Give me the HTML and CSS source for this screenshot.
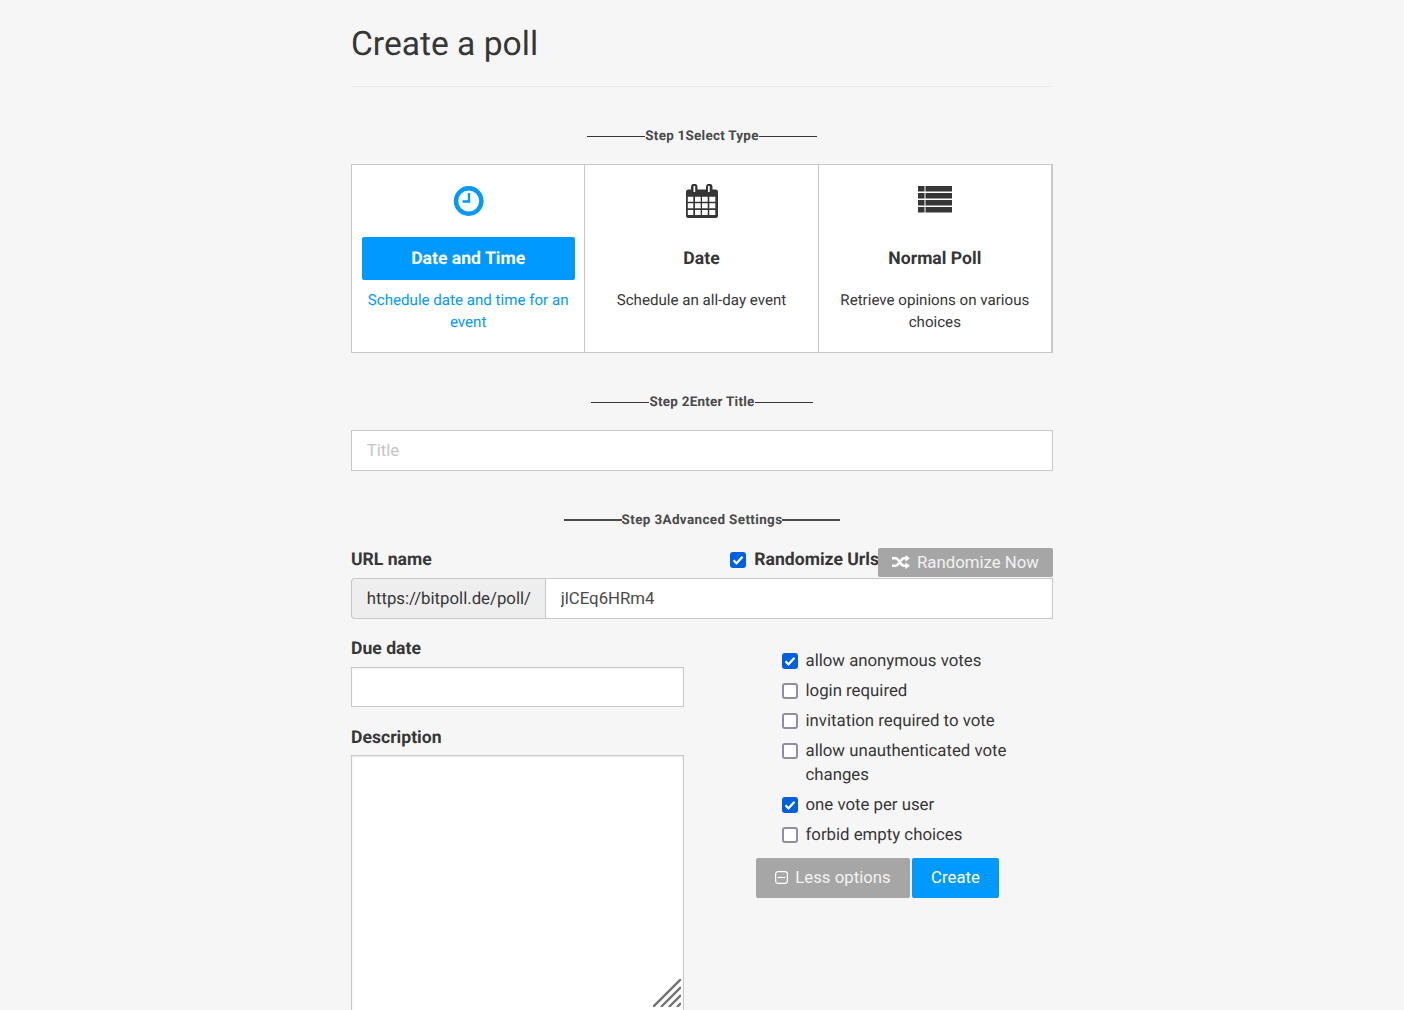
FILE: index.html
```html
<!DOCTYPE html>
<html lang="en">
<head>
<meta charset="utf-8">
<title>Create a poll</title>
<link rel="stylesheet" href="styles.css">
</head>
<body>
<main class="page">
  <h1 class="title">Create a poll</h1>

  <div class="step step-one"><span>Step 1</span><span>Select Type</span></div>
  <div class="types">
    <div class="type is-active">
      <svg class="type-icon" width="34" height="34" viewBox="0 0 34 34"><circle cx="16.700" cy="17" r="12.700" fill="#fff" stroke="#0099ff" stroke-width="4.400"/><path d="M17 9v8.500H10.500" fill="none" stroke="#0099ff" stroke-width="2.300"/></svg>
      <div class="type-name">Date and Time</div>
      <p class="type-text">Schedule date and time for an event</p>
    </div>
    <div class="type">
      <svg class="type-icon" width="34" height="34" viewBox="0 0 34 34"><path fill="#363636" d="M3 5.500H6V3a3 3 0 0 1 6.500 0v2.500H21V3a3 3 0 0 1 6.500 0v2.500H30.500A2.500 2.500 0 0 1 33 8V31.500A2.500 2.500 0 0 1 30.500 34h-27A2.500 2.500 0 0 1 1 31.500V8A2.500 2.500 0 0 1 3.500 5.500z"/><path fill="#fff" d="M8.500 2h1.700v6H8.500zM23 2h1.700v6H23zM2.800 12.700h5.500v5H2.800zM10 12.700h5.700v5H10zM17 12.700h5.700v5H17zM24.300 12.700h6v5h-6zM2.800 19.300h5.500v5H2.800zM10 19.300h5.700v5H10zM17 19.300h5.700v5H17zM24.300 19.300h6v5h-6zM2.800 26h5.500v5H2.800zM10 26h5.700v5H10zM17 26h5.700v5H17zM24.300 26h6v5h-6z"/></svg>
      <div class="type-name">Date</div>
      <p class="type-text">Schedule an all-day event</p>
    </div>
    <div class="type">
      <svg class="type-icon" width="34" height="34" viewBox="0 0 34 34"><path fill="#363636" d="M0 2h6.500v5.500H0zM7.500 2H34v5.500H7.500zM0 9h6.500v5.500H0zM7.500 9H34v5.500H7.500zM0 16h6.500v5.500H0zM7.500 16H34v5.500H7.500zM0 23h6.500v5.500H0zM7.500 23H34v5.500H7.500z"/></svg>
      <div class="type-name">Normal Poll</div>
      <p class="type-text">Retrieve opinions on various choices</p>
    </div>
  </div>

  <div class="step step-two"><span>Step 2</span><span>Enter Title</span></div>
  <input class="field title-field" type="text" placeholder="Title">

  <div class="step step-three"><span>Step 3</span><span>Advanced Settings</span></div>

  <div class="url-head">
    <label class="label">URL name</label>
    <div class="url-tools">
      <span class="box is-checked"><svg width="16" height="16" viewBox="0 0 16 16"><path d="M3.500 8.300l3 3 6-6.500" fill="none" stroke="#fff" stroke-width="2.200"/></svg></span>
      <span class="label randomize">Randomize Urls</span>
      <button class="btn btn-grey randomize-now" type="button">
        <svg width="18" height="14" viewBox="0 0 18 14"><path d="M0 3.200h3.500c3.500 0 5 7.600 8.500 7.600h2.500M0 10.800h3.500c1.400 0 2.400-1.100 3.300-2.700M8.800 5.800C9.700 4.200 10.700 3.200 12 3.200h2.500" fill="none" stroke="#fff" stroke-width="2.500"/><path d="M13.500 0l4.500 3.200-4.500 3.200zM13.500 7.600l4.500 3.200L13.500 14z" fill="#fff"/></svg>
        Randomize Now
      </button>
    </div>
  </div>
  <div class="url-group">
    <span class="url-addon">https://bitpoll.de/poll/</span>
    <input class="field url-input" type="text" value="jlCEq6HRm4">
  </div>

  <div class="settings">
    <div class="settings-left">
      <label class="label">Due date</label>
      <input class="field date-field" type="text">
      <label class="label desc-label">Description</label>
      <div class="desc-wrap">
        <textarea class="desc"></textarea>
        <svg class="grip" width="28" height="28" viewBox="0 0 28 28"><path d="M0 28L28 0M8 28L28 8M16 28L28 16M24 28L28 24" stroke="#737373" stroke-width="2.400" fill="none"/></svg>
      </div>
    </div>
    <div class="settings-right">
      <ul class="options">
        <li><span class="box is-checked"><svg width="16" height="16" viewBox="0 0 16 16"><path d="M3.500 8.300l3 3 6-6.500" fill="none" stroke="#fff" stroke-width="2.200"/></svg></span><span>allow anonymous votes</span></li>
        <li><span class="box"></span><span>login required</span></li>
        <li><span class="box"></span><span>invitation required to vote</span></li>
        <li><span class="box"></span><span>allow unauthenticated vote changes</span></li>
        <li><span class="box is-checked"><svg width="16" height="16" viewBox="0 0 16 16"><path d="M3.500 8.300l3 3 6-6.500" fill="none" stroke="#fff" stroke-width="2.200"/></svg></span><span>one vote per user</span></li>
        <li><span class="box"></span><span>forbid empty choices</span></li>
      </ul>
      <div class="actions">
        <button class="btn btn-grey btn-less" type="button">
          <svg width="13" height="13" viewBox="0 0 14 14"><rect x="0.700" y="0.700" width="12.600" height="12.600" rx="2.500" fill="none" stroke="#fff" stroke-width="1.300"/><path d="M3 7h8" stroke="#fff" stroke-width="1.300"/></svg>
          Less options
        </button>
        <button class="btn btn-blue" type="button">Create</button>
      </div>
    </div>
  </div>
</main>
</body>
</html>
```
FILE: styles.css
```css
* { box-sizing: border-box; }
html { overflow: hidden; }
body {
  margin: 0;
  background: #f6f6f6;
  color: #363636;
  font-family: Roboto, "Liberation Sans", sans-serif;
  font-size: 16.8px;
  text-rendering: geometricPrecision;
}
.page { width: 702px; margin: 0 auto; }
.title {
  margin: 0;
  padding-top: 24px;
  height: 87px;
  font-size: 33.6px;
  line-height: 42px;
  font-weight: 400;
  border-bottom: 1px solid #ececec;
}
.step {
  display: flex;
  justify-content: center;
  align-items: center;
  height: 20px;
  margin-top: 39px;
  font-size: 13.44px;
  letter-spacing: 0.26px;
  font-weight: 700;
  color: #4a4a4a;
}
.step::before, .step::after {
  content: "";
  width: 58px;
  height: 1px;
  background: #363636;
}
.step-three { letter-spacing: 0.38px; }
.step-three::before, .step-three::after { height: 2px; background: #4a4a4a; }

.types {
  display: grid;
  grid-template-columns: repeat(3, 1fr);
  margin-top: 18px;
  height: 189px;
  background: #fff;
  border: 1px solid #c8c8c8;
}
.type {
  display: flex;
  flex-direction: column;
  align-items: center;
  padding: 19px 9px 0 10px;
  text-align: center;
  border-right: 1px solid #c8c8c8;
}
.type-icon { display: block; flex: none; }
.type-name {
  align-self: stretch;
  margin-top: 19px;
  padding-right: 1px;
  height: 43px;
  line-height: 44px;
  font-size: 17.6px;
  font-weight: 700;
  border-radius: 2px;
}
.type-text {
  margin: 9px 1px 0 0;
  font-size: 15.12px;
  line-height: 22px;
}
.is-active .type-name { background: #0099ff; color: #fff; }
.is-active .type-text { color: #0099ff; }

.field {
  display: block;
  width: 100%;
  height: 41px;
  padding: 0 14.700px 2px;
  border: 1px solid #c8c8c8;
  border-radius: 0;
  background: #fff;
  color: #4a4a4a;
  font: 16.8px Roboto, "Liberation Sans", sans-serif;
  outline: 0;
}
.field::placeholder { color: #c6c6c6; }
.title-field { margin-top: 18px; }

.label { display: block; font-size: 17.6px; font-weight: 700; line-height: 24px; }
.url-head {
  display: flex;
  justify-content: space-between;
  align-items: flex-start;
  margin-top: 18px;
  height: 30px;
}
.url-tools { display: flex; align-items: flex-start; }
.url-tools .box { margin: 4px 8px 0 0; }
.randomize { margin-right: -1px; }
.url-group { display: flex; }
.url-addon {
  flex: none;
  width: 194px;
  height: 41px;
  line-height: 41px;
  padding: 0 14.700px;
  background: #eee;
  border: 1px solid #c8c8c8;
  border-right: 0;
  border-radius: 4px 0 0 4px;
  white-space: nowrap;
}
.btn {
  display: inline-flex;
  align-items: center;
  justify-content: center;
  padding: 0 0 2px;
  border: 0;
  border-radius: 2px;
  color: #fff;
  font: 16.8px Roboto, "Liberation Sans", sans-serif;
  cursor: pointer;
}
.btn svg { flex: none; }
.btn-grey { background: #a6a6a6; color: #f2f2f2; }
.btn-blue { background: #0099ff; width: 87px; height: 40px; }
.randomize-now { position: relative; width: 175px; height: 29px; gap: 7px; }
.btn-less { width: 154px; height: 40px; gap: 7px; }

.settings {
  display: grid;
  grid-template-columns: 333px 1fr;
  column-gap: 72px;
  margin-top: 18px;
}
.date-field { margin-top: 6px; height: 40px; box-shadow: inset 0 1px 2px rgba(10, 10, 10, .06); }
.desc-label { margin-top: 19px; }
.desc-wrap { position: relative; margin-top: 5px; }
.desc {
  display: block;
  width: 100%;
  height: 300px;
  padding: 10px 15px;
  border: 1px solid #c8c8c8;
  background: #fff;
  box-shadow: inset 0 1px 2px rgba(10, 10, 10, .1);
  resize: none;
  outline: 0;
  font: 16.8px Roboto, "Liberation Sans", sans-serif;
}
.grip { position: absolute; right: 3px; top: 224px; }
.options {
  list-style: none;
  margin: 0;
  padding: 12px 0 0 26px;
}
.options li {
  display: flex;
  align-items: flex-start;
  gap: 7.500px;
  line-height: 24px;
  margin-bottom: 6px;
}
.box {
  flex: none;
  display: block;
  width: 16px;
  height: 16px;
  border: 2px solid #8f8f9d;
  border-radius: 3px;
  background: #fff;
  margin-top: 4px;
}
.box.is-checked { background: #0060df; border: 0; }
.box svg { display: block; }
.actions { display: flex; gap: 2px; margin-top: 11px; }
```
